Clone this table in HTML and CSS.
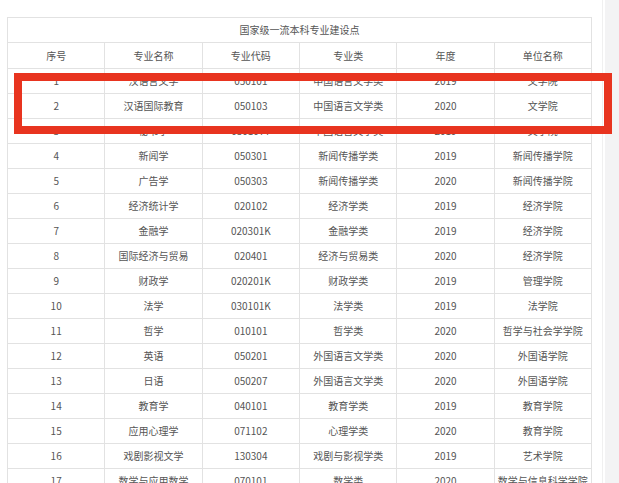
FILE: index.html
```html
<!DOCTYPE html>
<html lang="zh-CN">
<head>
<meta charset="utf-8">
<link rel="stylesheet" href="styles.css">
</head>
<body>
<div class="page">
  <div class="content">
    <table class="grid">
      <tr class="title"><td colspan="6">国家级一流本科专业建设点</td></tr>
      <tr class="head"><td>序号</td><td>专业名称</td><td>专业代码</td><td>专业类</td><td>年度</td><td>单位名称</td></tr>
      <tr><td>1</td><td>汉语言文学</td><td>050101</td><td>中国语言文学类</td><td>2019</td><td>文学院</td></tr>
      <tr><td>2</td><td>汉语国际教育</td><td>050103</td><td>中国语言文学类</td><td>2020</td><td>文学院</td></tr>
      <tr><td>3</td><td>秘书学</td><td>050107T</td><td>中国语言文学类</td><td>2019</td><td>文学院</td></tr>
      <tr><td>4</td><td>新闻学</td><td>050301</td><td>新闻传播学类</td><td>2019</td><td>新闻传播学院</td></tr>
      <tr><td>5</td><td>广告学</td><td>050303</td><td>新闻传播学类</td><td>2020</td><td>新闻传播学院</td></tr>
      <tr><td>6</td><td>经济统计学</td><td>020102</td><td>经济学类</td><td>2019</td><td>经济学院</td></tr>
      <tr><td>7</td><td>金融学</td><td>020301K</td><td>金融学类</td><td>2019</td><td>经济学院</td></tr>
      <tr><td>8</td><td>国际经济与贸易</td><td>020401</td><td>经济与贸易类</td><td>2020</td><td>经济学院</td></tr>
      <tr><td>9</td><td>财政学</td><td>020201K</td><td>财政学类</td><td>2019</td><td>管理学院</td></tr>
      <tr><td>10</td><td>法学</td><td>030101K</td><td>法学类</td><td>2019</td><td>法学院</td></tr>
      <tr><td>11</td><td>哲学</td><td>010101</td><td>哲学类</td><td>2020</td><td>哲学与社会学学院</td></tr>
      <tr><td>12</td><td>英语</td><td>050201</td><td>外国语言文学类</td><td>2020</td><td>外国语学院</td></tr>
      <tr><td>13</td><td>日语</td><td>050207</td><td>外国语言文学类</td><td>2020</td><td>外国语学院</td></tr>
      <tr><td>14</td><td>教育学</td><td>040101</td><td>教育学类</td><td>2019</td><td>教育学院</td></tr>
      <tr><td>15</td><td>应用心理学</td><td>071102</td><td>心理学类</td><td>2020</td><td>教育学院</td></tr>
      <tr><td>16</td><td>戏剧影视文学</td><td>130304</td><td>戏剧与影视学类</td><td>2019</td><td>艺术学院</td></tr>
      <tr><td>17</td><td>数学与应用数学</td><td>070101</td><td>数学类</td><td>2020</td><td>数学与信息科学学院</td></tr>
    </table>
  </div>
  <div class="rail"></div>
  <div class="highlight"></div>
</div>
</body>
</html>
```

FILE: styles.css
```css
html, body {
  margin: 0;
  padding: 0;
  background: #ffffff;
  overflow: hidden;
}
.page {
  position: relative;
  display: flex;
  width: 619px;
  height: 483px;
  overflow: hidden;
}
.content {
  flex: 0 0 603px;
  padding: 17px 0 0 7px;
  box-sizing: border-box;
  border-right: 1px solid #f0f0f0;
}
.rail {
  flex: 1;
  margin-left: 2px;
  background: #f3f3f4;
}
.grid {
  border-collapse: collapse;
  width: 585px;
  table-layout: fixed;
  font-family: "Noto Sans CJK SC", "Noto Sans", sans-serif;
  font-size: 10px;
  color: #555555;
}
.grid td {
  border: 1px solid #e2e2e2;
  height: 24px;
  padding: 0;
  text-align: center;
  vertical-align: middle;
  line-height: 12px;
}
.grid .head td {
  height: 25px;
}
.highlight {
  position: absolute;
  left: 14px;
  top: 73px;
  width: 598px;
  height: 61px;
  box-sizing: border-box;
  border: 8px solid #e8341f;
}
```
